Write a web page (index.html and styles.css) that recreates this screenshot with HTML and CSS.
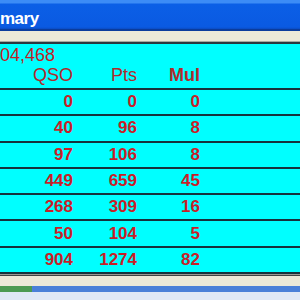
FILE: index.html
```html
<!DOCTYPE html>
<html lang="en">

<head>
    <meta charset="UTF-8">
    <title>Summary</title>
    <link rel="stylesheet" href="styles.css">
</head>

<body>
    <div class="window">
        <div class="titlebar"><span class="title">mary</span></div>
        <div class="menubar"></div>

        <div class="panel">
            <div class="score">04,468</div>
            <div class="row head">
                <span>QSO</span><span>Pts</span><span class="mul">Mul</span>
            </div>
            <div class="row"><span>0</span><span>0</span><span>0</span></div>
            <div class="row"><span>40</span><span>96</span><span>8</span></div>
            <div class="row"><span>97</span><span>106</span><span>8</span></div>
            <div class="row"><span>449</span><span>659</span><span>45</span></div>
            <div class="row"><span>268</span><span>309</span><span>16</span></div>
            <div class="row"><span>50</span><span>104</span><span>5</span></div>
            <div class="row"><span>904</span><span>1274</span><span>82</span></div>
        </div>

        <div class="footer"></div>
        <div class="status">
            <div class="status-green"></div>
            <div class="status-blue"></div>
        </div>
    </div>
</body>

</html>
```

FILE: styles.css
```css
* {
    margin: 0;
    padding: 0;
    box-sizing: border-box;
}

body {
    width: 300px;
    height: 300px;
    overflow: hidden;
    font-family: "Liberation Sans", Arial, sans-serif;
    background-color: #dfe8f6;
}

.window {
    display: flex;
    flex-direction: column;
    width: 300px;
}

.titlebar {
    height: 31px;
    background: linear-gradient(#3c8cf6 0, #3c8cf6 3px, #0b5fe6 4px, #0a5ae2 27px, #0a4cc4 29px);
    border-bottom: 2px solid #0b3c9c;
    white-space: nowrap;
}

.title {
    display: block;
    padding-top: 9px;
    font-size: 17px;
    line-height: 20px;
    font-weight: bold;
    letter-spacing: -0.5px;
    color: #ffffff;
}

.menubar {
    height: 13px;
    background-color: #ece9d8;
    border-bottom: 2px solid #2a3a40;
    box-shadow: inset 0 -1px 0 #a8a8a0;
}

.panel {
    background-color: #00ffff;
    padding-top: 1px;
}

.score {
    font-size: 18px;
    line-height: 20px;
    color: #c01e26;
}

.row {
    display: grid;
    grid-template-columns: 73px 64px 63px;
    height: 26.3px;
    border-bottom: 2px solid #16323c;
    align-items: center;
    font-size: 17px;
    font-weight: bold;
    color: #c81e28;
}

.row span {
    text-align: right;
}

.row.head {
    height: 25px;
    align-items: end;
    padding-bottom: 3px;
    font-size: 18px;
    font-weight: normal;
    color: #b02a2c;
}

.row.head .mul {
    font-weight: bold;
}

.footer {
    height: 12px;
    background-color: #ece9d8;
    border-top: 1px solid #9a9a94;
    box-shadow: inset 0 1px 0 #404444;
}

.status {
    display: flex;
    height: 6px;
}

.status-green {
    width: 32px;
    background-color: #4c9a52;
}

.status-blue {
    flex: 1;
    background-color: #4a80d8;
}
```
